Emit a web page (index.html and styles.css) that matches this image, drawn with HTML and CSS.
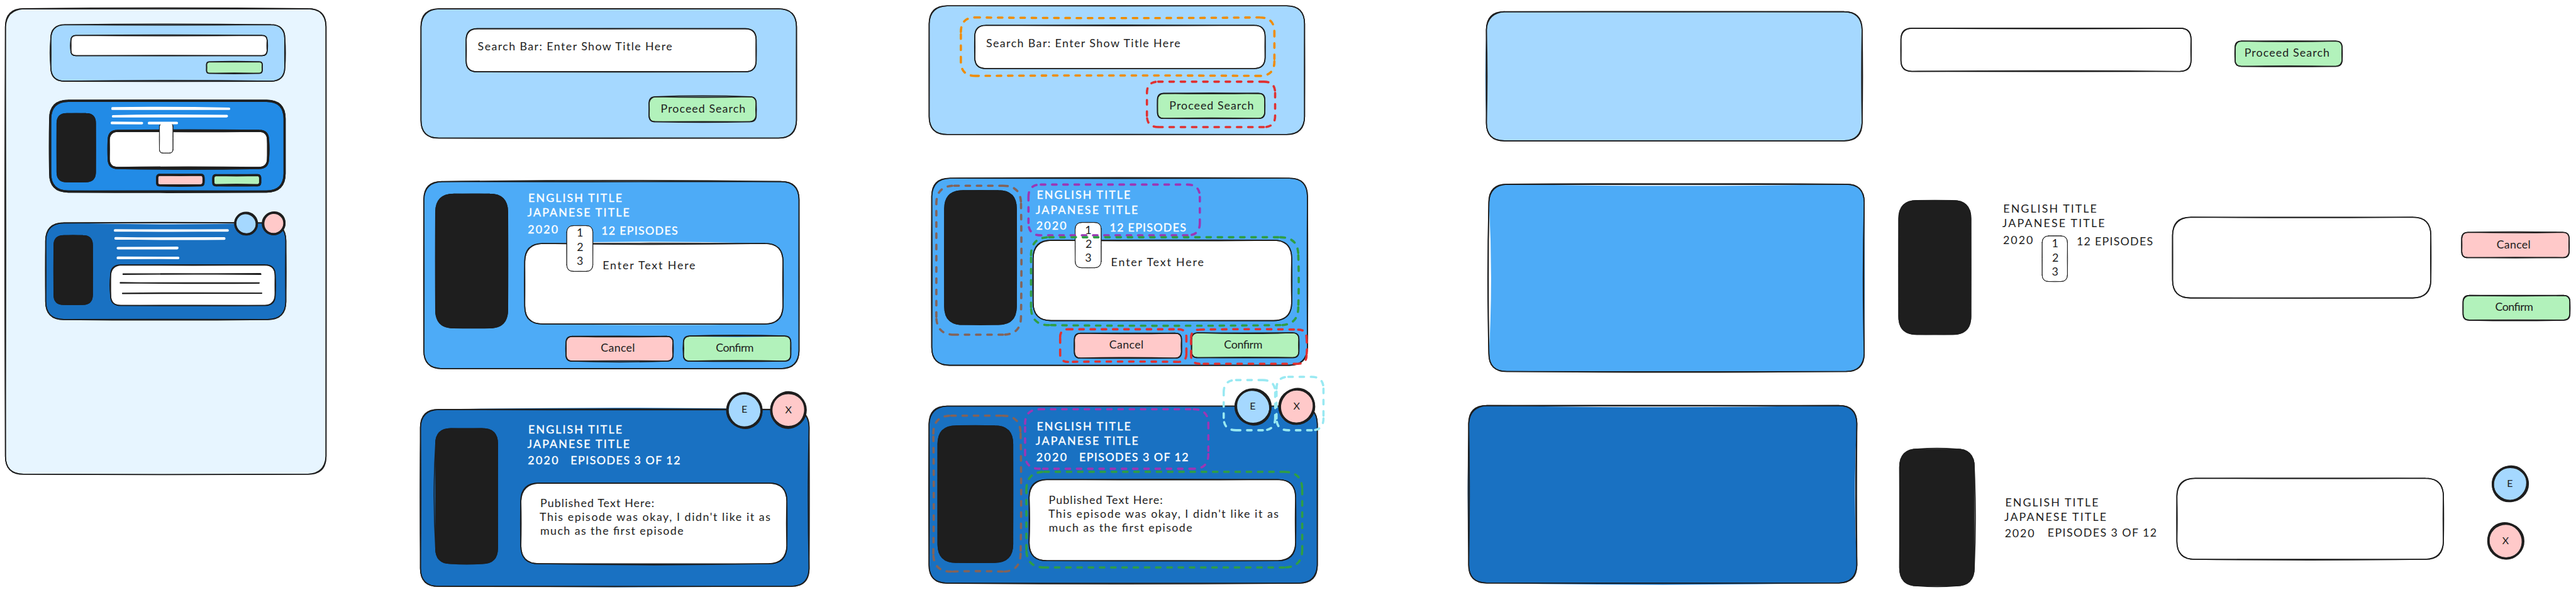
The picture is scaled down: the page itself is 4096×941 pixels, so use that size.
FILE: index.html
```html
<!DOCTYPE html>
<html lang="en">
<head>
<meta charset="utf-8">
<title>Show tracker wireframes</title>
<link rel="stylesheet" href="styles.css">
</head>
<body>
<main class="board">

<section class="col col-overview">
<svg viewBox="0 0 640 1053">
  <rect class="page" x="9.6" y="15.5" width="570.4" height="828" rx="32" data-a="1.5 0 .5 1" data-b="-.3 .3 .8 -.6" data-k="2"/>
  <rect class="light" x="90.3" y="44" width="416.4" height="100.5" rx="25" data-a="1.2 1 .3 1.2" data-b="-.8 -.2 -1.6 -.4"/>
  <rect class="white" x="126" y="63" width="349.3" height="36" rx="9" data-a=".8 .6 .3 .8" data-b="-.8 -.4 -.6 -.3"/>
  <rect class="green" x="367.4" y="110" width="99.1" height="20.3" rx="5" data-a=".8 0 .8 0"/>

  <rect class="blue heavy" x="89.2" y="179.3" width="417.1" height="161.4" rx="32" data-a=".2 0 .8 .6" data-b="0 0 -.2 -.2"/>
  <rect class="black" x="101.4" y="202" width="68.3" height="121.2" rx="17"/>
  <g class="rule">
    <path d="M200 192.5Q300 191.5 407.500 193.500M200 193.500L407 193.500"/>
    <path d="M201 206.800Q300 205 403.500 206.400M201 207L403 206.800"/>
    <path d="M199 218.300L252.500 218.800M199 219L252 219.300"/>
  </g>
  <rect class="white heavy" x="193.3" y="232.7" width="283.5" height="66" rx="16" data-a=".8 1 1.500 .6" data-b="-.6 0 -.8 -.4"/>
  <rect class="white thin" x="283.6" y="219" width="24.1" height="53.3" rx="6"/>
  <path class="rule" d="M265 218.500L314.500 218.600M265 219.200L314.500 218.900"/>
  <rect class="pink heavy" x="279.5" y="311" width="82.500" height="18.700" rx="4.700" data-a="0 .3 .8 0" data-b="-.3 0 0 0"/>
  <rect class="green heavy" x="379.5" y="311.500" width="83.300" height="18" rx="4.500" data-a="0 0 .3 .3" data-b="-.5 0 -.9 0"/>

  <rect class="navy" x="81.2" y="396.5" width="427.3" height="171.800" rx="32" data-a="1 .5 1 .4" data-b=".2 -.6 -.3 -.5" data-f="-2.500 0 0 0"/>
  <rect class="black" x="96" y="419" width="68.300" height="122.500" rx="17"/>
  <g class="rule">
    <path d="M204.500 409.700Q300 410.600 405 409.700M204.500 410L405 409.900"/>
    <path d="M205.500 423.800Q300 425.500 399 424.500M205.500 424.200L399 424"/>
    <path d="M209.500 441.400L315.500 440.800M209.500 441.500L315 441.500"/>
    <path d="M209.500 458.500L317 458.900M209.500 459L317 458.600"/>
  </g>
  <rect class="white" x="196.700" y="471.300" width="292.800" height="72" rx="18" data-a=".5 .8 .6 1.200" data-b="-.5 -.2 -.3 0" data-k="1.500"/>
  <g class="line">
    <path d="M219 487.300Q340 486.600 464 487.800M219 487.800L463.500 486.800"/>
    <path d="M214 502.800Q340 504.600 460.500 503.600M214 503.400L461 503.200"/>
    <path d="M218 521.700Q340 520.600 465.500 521.500M218 522L465.500 521.600"/>
  </g>
  <g class="light ring"><ellipse cx="437.800" cy="397.600" rx="19.300" ry="19.200"/><ellipse cx="437.600" cy="398" rx="19.500" ry="18.600" transform="rotate(40 437.600 398)"/></g>
  <g class="pink ring"><ellipse cx="486.800" cy="397.500" rx="19.300" ry="19"/><ellipse cx="487.200" cy="397.200" rx="19.600" ry="18.600" transform="rotate(120 487.200 397.200)"/></g>
</svg>
</section>

<section class="col col-screens">
<svg viewBox="640 0 960 1053">
  <rect class="light" x="748.8" y="15.7" width="668.2" height="230" rx="32" data-k="1.500"/>
  <rect class="white" x="829.2" y="51" width="516" height="76.700" rx="19.500"/>
  <text x="849.8" y="90" textLength="345.8">Search Bar: Enter Show Title Here</text>
  <rect class="green" x="1154.700" y="172" width="190.500" height="44.500" rx="11" data-a="1.500 .3 1.200 0" data-b="-1 -.6 -.2 -.3" data-k="1.500"/>
  <text x="1175.400" y="200.500" textLength="150.600">Proceed Search</text>

  <rect class="sky" x="753.9" y="323" width="667.600" height="332.700" rx="32" data-a="2 .4 .4 .3" data-b="-.2 -.4 -.2 -.4" data-k="1.200"/>
  <rect class="black" x="775" y="345.200" width="128" height="238" rx="32"/>
  <g class="bright">
    <text x="939.8" y="359.300" textLength="166.700">ENGLISH TITLE</text>
    <text x="938" y="385.300" textLength="181.800">JAPANESE TITLE</text>
    <text x="939" y="415" textLength="53.600">2020</text>
    <text x="1069.800" y="417" textLength="135.900">12 EPISODES</text>
  </g>
  <rect class="white" x="933.400" y="433" width="459.600" height="143.300" rx="32" data-a=".3 .4 .3 .5" data-b="-1.600 -.5 -.2 -.2" data-f="3 0 1.800 0" data-k="1"/>
  <text x="1072" y="479" textLength="164.900">Enter Text Here</text>
  <rect class="white thin" x="1008.200" y="401.300" width="46.400" height="81.400" rx="11.500"/>
  <g class="mid"><text x="1031.600" y="421">1</text><text x="1032" y="446">2</text><text x="1031.600" y="471">3</text></g>
  <rect class="pink" x="1006.900" y="598.300" width="190.500" height="44" rx="11" data-a=".3 .3 1.500 .5" data-b="-1 -.7 -.6 -.2"/>
  <text x="1068.800" y="626" textLength="60.600">Cancel</text>
  <rect class="green" x="1215.800" y="597.700" width="191" height="44.600" rx="11" data-a="1.500 .3 .6 .6" data-b="0 -.3 -.9 -.6" data-f="-2 0 0 0"/>
  <text x="1273.600" y="625" textLength="67.400">Confirm</text>

  <rect class="navy" x="747.9" y="728.300" width="691.500" height="314.700" rx="32" data-a=".8 .4 .3 .6" data-b="-.8 -1.600 .2 -.8" data-f="3 0 1.500 0" data-k="1.200"/>
  <rect class="black" x="775" y="762.300" width="110" height="240" rx="27" data-a="0 0 1 2.800"/>
  <g class="bright">
    <text x="939.8" y="771.300" textLength="166.700">ENGLISH TITLE</text>
    <text x="938" y="797" textLength="182">JAPANESE TITLE</text>
    <text x="939" y="826.300" textLength="54">2020</text>
    <text x="1015" y="826" textLength="195">EPISODES 3 OF 12</text>
  </g>
  <rect class="white" x="926.500" y="859.300" width="473.400" height="143.400" rx="32" data-a="0 .3 2 .5" data-b="-.3 -.7 .3 -.5" data-k="1.500"/>
  <text x="961" y="901.700" textLength="202.900">Published Text Here:</text>
  <text x="960" y="926.700" textLength="410.500">This episode was okay, I didn't like it as</text>
  <text x="961" y="951.700" textLength="254.800">much as the first episode</text>
  <g class="light ring"><ellipse cx="1324.200" cy="729.800" rx="30.600" ry="30.400"/><ellipse cx="1324.600" cy="730.400" rx="31.200" ry="29.600" transform="rotate(60 1324.600 730.400)"/></g>
  <g class="pink ring"><ellipse cx="1402.600" cy="729.300" rx="30.800" ry="30.200"/><ellipse cx="1402.400" cy="729.300" rx="31.600" ry="30" transform="rotate(100 1402.400 729.300)"/></g>
  <g class="mid small"><text x="1324.400" y="734.500">E</text><text x="1402.600" y="735.200">X</text></g>
</svg>
</section>

<section class="col col-marked">
<svg viewBox="1600 0 960 1053">
  <rect class="light" x="1652.900" y="10.300" width="668" height="228.900" rx="32" data-k="1.200"/>
  <rect class="white" x="1734.100" y="45" width="516.600" height="77" rx="19.500" data-a="-.8 .3 0 .3" data-b=".5 -.3 .3 -.3" data-f="0 0 1.500 0"/>
  <text x="1754.300" y="84" textLength="345.300">Search Bar: Enter Show Title Here</text>
  <rect class="green" x="2059.200" y="166" width="191" height="44.700" rx="11" data-a=".6 .2 .2 0" data-b="-.6 -.2 -.9 .2" data-k="1"/>
  <text x="2080.300" y="194.300" textLength="150.100">Proceed Search</text>
  <rect class="dash orange" x="1709.300" y="31" width="557.900" height="104" rx="26" data-a="-1.200 0 -.8 0"/>
  <rect class="dash red" x="2040.400" y="145.300" width="228.100" height="80.700" rx="20"/>

  <rect class="sky" x="1657.500" y="317" width="668.500" height="332.700" rx="32" data-a="1.200 .5 .3 .6" data-b="-.4 -.5 0 -.6" data-k="1.500"/>
  <rect class="black" x="1680.500" y="339.200" width="127.500" height="238" rx="32"/>
  <rect class="white" x="1837.900" y="427.300" width="460.100" height="143" rx="32" data-a="-1 .4 .2 .6" data-b=".3 -.5 -.2 -.3" data-k="1"/>
  <text x="1976.500" y="473.300" textLength="164.900">Enter Text Here</text>
  <g class="bright">
    <text x="1844.300" y="353.300" textLength="166.700">ENGLISH TITLE</text>
    <text x="1842.500" y="380" textLength="181.800">JAPANESE TITLE</text>
    <text x="1843.400" y="408.700" textLength="53.600">2020</text>
    <text x="1974.300" y="411.700" textLength="135.700">12 EPISODES</text>
  </g>
  <rect class="white thin" x="1912.700" y="395.700" width="46.300" height="80.600" rx="11.500"/>
  <g class="mid"><text x="1936" y="416">1</text><text x="1936.800" y="441">2</text><text x="1936" y="466">3</text></g>
  <rect class="pink" x="1911.300" y="592.700" width="190.600" height="44.300" rx="11" data-a=".2 .3 .3 .4" data-b="-1 -.5 -1 -.3"/>
  <text x="1973.300" y="620.300" textLength="61.100">Cancel</text>
  <rect class="green" x="2119.800" y="592" width="191" height="44.200" rx="11" data-a="-.3 .3 .3 .4" data-b="-1.400 -.5 -.9 -.3"/>
  <text x="2177.600" y="620" textLength="68.400">Confirm</text>
  <rect class="dash brown" x="1665.700" y="330.300" width="150.600" height="265" rx="32" data-a="0 .8 0 0"/>
  <rect class="dash violet" x="1829.600" y="328.300" width="304.900" height="90.300" rx="22"/>
  <rect class="dash leaf" x="1834.200" y="422" width="475.500" height="156.300" rx="32" data-a="0 .8 1.200 0"/>
  <rect class="dash red" x="1886" y="585.700" width="224.600" height="58" rx="14" data-a="0 0 -.6 0"/>
  <rect class="dash red" x="2118.900" y="586.300" width="205.500" height="60.700" rx="15" data-a=".8 .8 0 0"/>

  <rect class="navy" x="1652.700" y="722.300" width="690.900" height="315" rx="32" data-a=".3 .3 1.500 .5" data-b="-.3 -.3 0 -.4" data-k="2"/>
  <rect class="black" x="1668.600" y="757.500" width="133" height="242.800" rx="32"/>
  <g class="bright">
    <text x="1844.300" y="765" textLength="167.100">ENGLISH TITLE</text>
    <text x="1842.500" y="791" textLength="182.500">JAPANESE TITLE</text>
    <text x="1843.400" y="820.700" textLength="54.300">2020</text>
    <text x="1919.800" y="820" textLength="194.500">EPISODES 3 OF 12</text>
  </g>
  <rect class="white" x="1830.700" y="853" width="474.300" height="144.300" rx="32" data-a=".4 .4 .6 0" data-b="-.6 -.6 -.2 -1" data-k="1.200"/>
  <text x="1865.600" y="896" textLength="202.900">Published Text Here:</text>
  <text x="1865" y="921" textLength="409.700">This episode was okay, I didn't like it as</text>
  <text x="1865.600" y="946" textLength="255.400">much as the first episode</text>
  <g class="light ring"><ellipse cx="2229.200" cy="723.300" rx="31.200" ry="30.600"/><ellipse cx="2229.400" cy="724.200" rx="31.600" ry="29.600" transform="rotate(50 2229.400 724.200)"/></g>
  <g class="pink ring"><ellipse cx="2307" cy="723.200" rx="31" ry="30.400"/><ellipse cx="2307.200" cy="722.800" rx="31.400" ry="29.600" transform="rotate(120 2307.200 722.800)"/></g>
  <g class="mid small"><text x="2228.500" y="728.700">E</text><text x="2306.800" y="729">X</text></g>
  <rect class="dash brown" x="1660.300" y="739.300" width="155.300" height="277.400" rx="32" data-a="0 1 -.8 -.8"/>
  <rect class="dash violet" x="1823.600" y="728" width="326.100" height="105.800" rx="26"/>
  <rect class="dash leaf" x="1825.900" y="839.300" width="490.800" height="170" rx="32"/>
  <rect class="dash cyan" x="2177" y="676" width="91.600" height="89.300" rx="22"/>
  <rect class="dash cyan" x="2271" y="670.300" width="83.500" height="95" rx="21"/>
</svg>
</section>

<section class="col col-parts">
<svg viewBox="2560 0 2022 1053">
  <rect class="light" x="2644.100" y="20.800" width="668.500" height="229.700" rx="32" data-a=".4 .8 .2 .3" data-b="-.3 -.8 0 -1.200" data-f="0 0 0 2.500" data-k="2"/>
  <rect class="sky" x="2648.500" y="327.700" width="667.900" height="333.100" rx="32" data-a="1 -1.800 .4 1.800" data-b="-.5 -.6 1.400 1" data-f="-3 1 0 -4" data-k="1.500"/>
  <rect class="navy" x="2612.600" y="721.300" width="690.700" height="315.700" rx="32" data-a="-.8 -2 0 -1.200" data-b=".3 -.5 .3 .8" data-f="-3 -3.500 3 1.800" data-k="2"/>

  <rect class="white" x="3381.700" y="50.200" width="516.200" height="76.800" rx="19.500" data-a="-1 .3 -1 .3" data-b=".2 -.3 .3 -.3" data-k="1"/>
  <rect class="green" x="3976.300" y="73" width="190.400" height="45" rx="11" data-a="-1 .3 .6 .4" data-b=".3 -.4 -.6 -.2" data-k="1.200"/>
  <text x="3992.800" y="101" textLength="151.400">Proceed Search</text>

  <rect class="black" x="3378" y="356.800" width="128" height="238" rx="32"/>
  <text x="3563.800" y="378.400" textLength="166.200">ENGLISH TITLE</text>
  <text x="3562" y="404.500" textLength="182.300">JAPANESE TITLE</text>
  <text x="3563.300" y="434.300" textLength="53.200">2020</text>
  <text x="3694.400" y="436" textLength="135.500">12 EPISODES</text>
  <rect class="white thin" x="3633" y="419.600" width="45" height="81.200" rx="11.500"/>
  <g class="mid"><text x="3656" y="440">1</text><text x="3656.500" y="465">2</text><text x="3656" y="490">3</text></g>
  <rect class="white" x="3865" y="386.400" width="459.600" height="143.600" rx="32" data-a="-.8 .3 .3 .3" data-b="0 -.5 0 -.3" data-k="1.200"/>
  <rect class="pink" x="4379.500" y="413.200" width="191.200" height="45" rx="11" data-a=".8 -.4 .4 .3" data-b="-.8 .2 -.5 -.3"/>
  <text x="4441.500" y="441.900" textLength="60.500">Cancel</text>
  <rect class="green" x="4381.900" y="525.500" width="190.100" height="44" rx="11" data-a="-.8 .3 1 .3" data-b="0 -.3 -.5 -.2" data-f="0 0 -1.500 0" data-k="1.200"/>
  <text x="4439" y="552.800" textLength="67.800">Confirm</text>

  <rect class="black" x="3379.500" y="798.800" width="132.600" height="243.200" rx="32" data-a="1.500 2 1.500 0"/>
  <text x="3567.300" y="900.300" textLength="165.700">ENGLISH TITLE</text>
  <text x="3565.600" y="926.300" textLength="181.400">JAPANESE TITLE</text>
  <text x="3566.400" y="955.700" textLength="52.600">2020</text>
  <text x="3642.600" y="955" textLength="194">EPISODES 3 OF 12</text>
  <rect class="white" x="3872.700" y="850.700" width="474.200" height="144.100" rx="32" data-a="-.6 .4 1.300 -.6" data-b=".3 -.5 .2 .4" data-k="1.200"/>
  <g class="light ring"><ellipse cx="4466" cy="860.800" rx="31.200" ry="30.200"/><ellipse cx="4465.600" cy="860.600" rx="31.600" ry="29.800" transform="rotate(130 4465.600 860.600)"/></g>
  <g class="pink ring"><ellipse cx="4458" cy="962.500" rx="31.200" ry="30.800"/><ellipse cx="4457.600" cy="962" rx="31.800" ry="30" transform="rotate(60 4457.600 962)"/></g>
  <g class="mid small"><text x="4465.200" y="866.300">E</text><text x="4457.600" y="968.500">X</text></g>
</svg>
</section>

</main>
<script src="sketch.js"></script>
</body>
</html>
```
FILE: styles.css
```css
html, body { margin: 0; background: #fff; }
.board { display: flex; width: 4096px; height: 941px; overflow: hidden; }
.col { min-width: 0; height: 941px; }
.col-overview { flex: 640 0 0; }
.col-screens, .col-marked { flex: 960 0 0; }
.col-parts { flex: 2022 0 0; }
.col svg { display: block; width: 100%; height: 100%; overflow: visible; }

svg { --ink: #1e1e1e; fill: none; }
rect, .ink { stroke: var(--ink); stroke-width: 1.8; stroke-linecap: round; stroke-linejoin: round; }
.fill { stroke: none; }
.ink { fill: none; }

.page { fill: #e7f5ff; }
.light { fill: #a5d8ff; }
.blue { fill: #228be6; }
.sky { fill: #4dabf7; }
.navy { fill: #1971c2; }
.white { fill: #fff; }
.green { fill: #b2f2bb; }
.pink { fill: #ffc9c9; }
.black { fill: #1e1e1e; }

.heavy .ink { stroke-width: 3.8; }
.thin .ink { stroke-width: 1; }

.rule { stroke: #fff; stroke-width: 4.2; stroke-linecap: round; }
.line { stroke: #1e1e1e; stroke-width: 2.2; stroke-linecap: round; }
.ring ellipse { stroke: #1e1e1e; stroke-width: 3.8; }
.ring ellipse + ellipse { fill: none; }

.dash .ink { stroke-width: 4; stroke-dasharray: 8 12; }
.orange { --ink: #f08c00; }
.red { --ink: #e03131; }
.brown { --ink: #846358; }
.violet { --ink: #9c36b5; }
.leaf { --ink: #2f9e44; }
.cyan { --ink: #99e9f2; }

text { font-family: Lato, "Open Sans", sans-serif; font-size: 20px; fill: #1e1e1e; }
.bright text { fill: #fff; stroke: #fff; stroke-width: .4; }
.mid text { text-anchor: middle; }
.small text { font-size: 18px; }
```
FILE: sketch.js
```js
// Turns each plain rect into a hand-drawn box: a filled body and one or two bowed outlines.
// data-a / data-b: how far each side (top right bottom left) of a pass bows outward.
// data-f: the same for the body; data-k: how much the corners of the second pass are cut.
const NS = 'http://www.w3.org/2000/svg';
const num = (el, n) => parseFloat(el.getAttribute(n));
const bows = (s, d) => (s || d).trim().split(/\s+/).map(Number);

function outline(x, y, w, h, r, [t, rt, b, l], k, closed) {
  const X = x + w, Y = y + h, m = (p) => (closed ? '' : `M${p}`);
  return `M${x + r} ${y}Q${x + w / 2} ${y - 2 * t} ${X - r} ${y}` +
    m(`${X - r} ${y}`) + `Q${X - k / 2} ${y} ${X} ${y + r}` +
    m(`${X} ${y + r}`) + `Q${X + 2 * rt} ${y + h / 2} ${X} ${Y - r}` +
    m(`${X} ${Y - r}`) + `Q${X - k} ${Y - k / 2} ${X - r} ${Y}` +
    m(`${X - r} ${Y}`) + `Q${x + w / 2} ${Y + 2 * b} ${x + r} ${Y}` +
    m(`${x + r} ${Y}`) + `Q${x} ${Y} ${x} ${Y - r}` +
    m(`${x} ${Y - r}`) + `Q${x - 2 * l} ${y + h / 2} ${x} ${y + r}` +
    m(`${x} ${y + r}`) + `Q${x + k} ${y + k} ${x + r} ${y}`;
}

function add(g, cls, d) {
  const p = document.createElementNS(NS, 'path');
  p.setAttribute('class', cls);
  p.setAttribute('d', d);
  g.appendChild(p);
}

document.querySelectorAll('rect').forEach((el) => {
  const box = ['x', 'y', 'width', 'height', 'rx'].map((n) => num(el, n));
  const dashed = el.classList.contains('dash');
  const a = bows(el.dataset.a, dashed ? '0 0 0 0' : '.3 .3 .3 .3');
  const b = bows(el.dataset.b, '-.3 -.3 -.3 -.3');
  const g = document.createElementNS(NS, 'g');
  g.setAttribute('class', el.getAttribute('class'));
  if (!dashed) add(g, 'fill', outline(...box, bows(el.dataset.f, '0 0 0 0'), 0, true));
  add(g, 'ink', outline(...box, a, 0, false));
  if (!dashed) add(g, 'ink', outline(...box, b, parseFloat(el.dataset.k || '.6'), false));
  el.replaceWith(g);
});
```
